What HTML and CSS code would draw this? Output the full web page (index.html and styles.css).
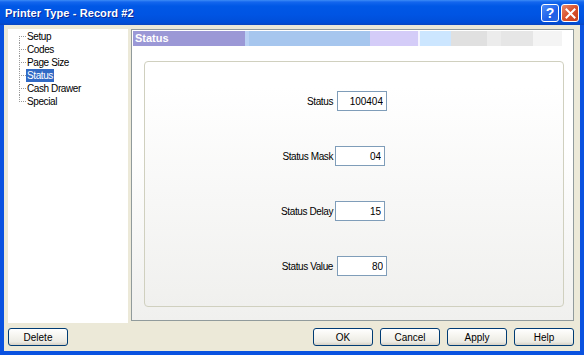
FILE: index.html
```html
<!DOCTYPE html>
<html lang="en">
<head>
    <meta charset="UTF-8">
    <title>Printer Type - Record #2</title>
    <link rel="stylesheet" href="styles.css">
</head>
<body>
    <div class="window">
        <!-- Title bar -->
        <div class="titlebar">
            <span class="title">Printer Type - Record #2</span>
            <div class="caption-btns">
                <button class="cap-btn cap-help">?</button>
                <button class="cap-btn cap-close">
                    <svg width="11" height="11" viewBox="0 0 11 11">
                        <path d="M1.5 1.5 L9.5 9.5 M9.5 1.5 L1.5 9.5" stroke="#fff" stroke-width="2" stroke-linecap="square"/>
                    </svg>
                </button>
            </div>
        </div>

        <div class="body">
            <div class="main">
                <!-- Tree of pages -->
                <ul class="tree">
                    <li><span>Setup</span></li>
                    <li><span>Codes</span></li>
                    <li><span>Page Size</span></li>
                    <li class="selected"><span>Status</span></li>
                    <li><span>Cash Drawer</span></li>
                    <li><span>Special</span></li>
                </ul>

                <!-- Page content -->
                <div class="panel">
                    <div class="panel-head">Status</div>
                    <div class="group">
                        <div class="row">
                            <label for="status">Status</label>
                            <input id="status" class="shift" type="text" value="100404">
                        </div>
                        <div class="row">
                            <label for="mask">Status Mask</label>
                            <input id="mask" type="text" value="04">
                        </div>
                        <div class="row">
                            <label for="delay">Status Delay</label>
                            <input id="delay" type="text" value="15">
                        </div>
                        <div class="row">
                            <label for="value">Status Value</label>
                            <input id="value" class="shift" type="text" value="80">
                        </div>
                    </div>
                </div>
            </div>

            <!-- Buttons at the bottom -->
            <div class="footer">
                <button class="btn">Delete</button>
                <div class="btn-group">
                    <button class="btn">OK</button>
                    <button class="btn">Cancel</button>
                    <button class="btn">Apply</button>
                    <button class="btn">Help</button>
                </div>
            </div>
        </div>
    </div>
</body>
</html>
```

FILE: styles.css
```css
/* Page */
body {
    margin: 0;
    font-family: "Liberation Sans", Arial, sans-serif;
    font-size: 10px;
}

/* Whole dialog with the blue XP frame */
.window {
    width: 584px;
    height: 355px;
    background-color: #0a52e0;
    display: flex;
    flex-direction: column;
}

/* Title bar */
.titlebar {
    height: 25px;
    display: flex;
    align-items: center;
    justify-content: space-between;
    padding: 0 5px 0 5px;
    background: linear-gradient(#3d8cf6 0, #1466ee 2px, #0058e6 6px, #0054e3 60%, #004ed8 90%, #0a46c0 100%);
}

.title {
    color: #fff;
    font-weight: bold;
    font-size: 11px;
    letter-spacing: 0.1px;
    text-shadow: 1px 1px 0 #0b2a98;
}

.caption-btns {
    display: flex;
    gap: 2px;
    margin-top: 1px;
}

.cap-btn {
    width: 18px;
    height: 18px;
    padding: 0;
    border: 1px solid #fff;
    border-radius: 3px;
    display: flex;
    align-items: center;
    justify-content: center;
    color: #fff;
    font-family: "Liberation Sans", Arial, sans-serif;
    font-weight: bold;
    font-size: 14px;
}

.cap-help {
    background: linear-gradient(135deg, #4c8cf8, #1c5ee8 60%, #2a68e0);
}

.cap-close {
    background: linear-gradient(135deg, #e88a6c, #d8502c 50%, #c8401e);
}

/* Beige dialog body */
.body {
    flex: 1;
    margin: 0 4px 4px 4px;
    background-color: #ece9d8;
    padding: 4px 6px 5px 4px;
    display: flex;
    flex-direction: column;
}

.main {
    display: flex;
    gap: 3px;
    height: 294px;
}

/* Tree on the left */
.tree {
    width: 120px;
    margin: 0;
    padding: 1px 0 0 0;
    list-style: none;
    background-color: #fff;
}

.tree li {
    display: flex;
    height: 13px;
    align-items: center;
    color: #000;
    letter-spacing: -0.4px;
}

/* Dotted connector lines */
.tree li::before {
    content: "";
    width: 7px;
    height: 13px;
    margin-left: 11px;
    background:
        linear-gradient(to right, #9a9a9a 50%, transparent 50%) 0 6px / 2px 1px repeat-x,
        linear-gradient(to bottom, #9a9a9a 50%, transparent 50%) 0 0 / 1px 2px repeat-y;
}

.tree li:first-child::before {
    background:
        linear-gradient(#fff, #fff) 0 0 / 1px 6px no-repeat,
        linear-gradient(to right, #9a9a9a 50%, transparent 50%) 0 6px / 2px 1px repeat-x,
        linear-gradient(to bottom, #9a9a9a 50%, transparent 50%) 0 0 / 1px 2px repeat-y;
}

.tree li:last-child::before {
    background:
        linear-gradient(#fff, #fff) 0 7px / 1px 6px no-repeat,
        linear-gradient(to right, #9a9a9a 50%, transparent 50%) 0 6px / 2px 1px repeat-x,
        linear-gradient(to bottom, #9a9a9a 50%, transparent 50%) 0 0 / 1px 2px repeat-y;
}

.tree li span {
    padding: 0 1px;
    height: 13px;
    line-height: 13px;
}

.tree li.selected span {
    background-color: #316ac5;
    color: #fff;
}

/* Right side page */
.panel {
    flex: 1;
    height: 292px;
    box-sizing: border-box;
    border: 1px solid #919b9c;
    padding: 1px;
    display: flex;
    flex-direction: column;
    background: linear-gradient(#fff 40%, #f0f0ee 100%);
}

.panel-head {
    height: 15px;
    line-height: 15px;
    padding-left: 2px;
    color: #fff;
    font-weight: bold;
    font-size: 11px;
    background: linear-gradient(to right,
        #9b98d6 0, #9b98d6 112px,
        #b8d0f4 112px, #b8d0f4 116px,
        #a6c6ee 116px, #a6c6ee 237px,
        #d4ccf8 237px, #d4ccf8 285px,
        #f4f4ff 285px, #f4f4ff 287px,
        #cce6ff 287px, #cce6ff 318px,
        #e0e0e0 318px, #e0e0e0 354px,
        #ececec 354px, #ececec 368px,
        #e6e6e6 368px, #e6e6e6 400px,
        #f4f4f4 400px, #f4f4f4 429px,
        #fff 429px);
}

/* Rounded group box */
.group {
    flex: 1;
    margin: 15px 8px 12px 11px;
    border: 1px solid #d0d0bf;
    border-radius: 4px;
    padding-top: 29px;
    display: flex;
    flex-direction: column;
    gap: 35px;
    background: linear-gradient(#fff 10%, #f0f0ee 100%);
}

.row {
    display: flex;
    align-items: center;
    height: 20px;
}

.row label {
    width: 188px;
    text-align: right;
    letter-spacing: -0.4px;
}

.row input {
    width: 50px;
    height: 20px;
    box-sizing: border-box;
    margin: 0 0 0 2px;
    padding: 0 3px;
    border: 1px solid #7f9db9;
    font-family: "Liberation Sans", Arial, sans-serif;
    font-size: 10px;
    text-align: right;
    background-color: #fff;
}

.row input.shift {
    margin-left: 4px;
}

/* Footer buttons */
.footer {
    margin-top: 5px;
    display: flex;
    justify-content: space-between;
}

.btn-group {
    display: flex;
    gap: 7px;
}

.btn {
    width: 60px;
    height: 18px;
    padding: 0;
    border: 1px solid #003c74;
    border-radius: 3px;
    background: linear-gradient(#fff 0, #f6f5f0 40%, #ecebe4 80%, #d6d0c5 100%);
    font-family: "Liberation Sans", Arial, sans-serif;
    font-size: 10px;
    color: #000;
}
```
